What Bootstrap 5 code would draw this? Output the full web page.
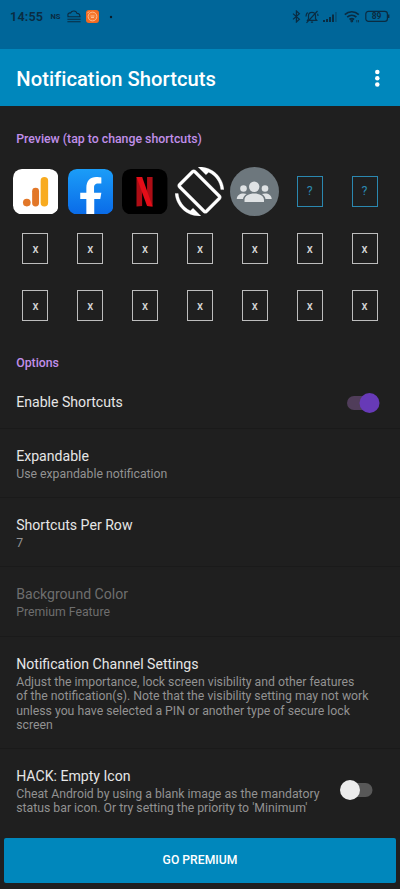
<!DOCTYPE html>
<html lang="en" data-bs-theme="dark">
<head>
<meta charset="utf-8">
<meta name="viewport" content="width=device-width, initial-scale=1">
<title>Notification Shortcuts</title>
<link href="https://cdn.jsdelivr.net/npm/bootstrap@5.3.0/dist/css/bootstrap.min.css" rel="stylesheet">
<style>
body{background:#1f1f1f;font-family:Roboto,"Liberation Sans",sans-serif;height:889px;overflow:hidden}
svg{display:block;flex:none}
.status{height:49px;background:#006699;color:#0a2c42;padding:0 9px 0 10px}
.status-in{height:33px}
.clock{font-size:12.6px;font-weight:600;letter-spacing:.2px;line-height:16px;width:40.5px}
.carrier{font-size:7.6px;font-weight:700;line-height:10px;width:16.5px}
.bt{margin-right:4px}
.bell{margin-right:4px}
.signal{margin-right:7px}
.wifi{margin-right:5px}
.appbar{height:57px;background:#0087bc;padding:2px 15px 0 16.3px}
.appbar h1{font-size:20.2px;font-weight:500;letter-spacing:.03px;color:#fff;line-height:26px}
.heading{font-size:12.3px;font-weight:500;color:#c18fea;line-height:16px;padding-left:16.2px}
.heading-first{padding-top:25px}
.heading-next{padding-top:21px}
.shortcuts{display:grid;grid-template-columns:repeat(7,1fr);grid-auto-rows:57px;padding:0 8px;margin-top:16px}
.slot{width:26px;height:31px;border:1.4px solid #bdbdbd;color:#d2d2d2;font-size:12px;font-weight:500;line-height:1}
.slot-new{border-color:#2b88b0;color:#2b88b0;font-size:12.5px;font-weight:400}
.pref{padding:16.75px 16.2px 0;height:69px;border-bottom:1px solid #1a1a1a;color:#e6e6e6}
.title{font-size:14.1px;line-height:20.5px}
.desc{font-size:12.27px;line-height:14.4px;color:#929292;padding-top:.8px}
.off,.off .desc{color:#6e6e6e}
.pref-switch{height:58px;padding-top:6px}
.pref-off{height:70px}
.pref-channel{height:112px}
.pref-last{height:89px;border:0}
.toggle{width:33px;height:20px}
.toggle-on{margin-right:3.5px}
.toggle-off{margin:14px 10.8px 0 0}
.premium{height:45px;margin:0 4px;background:#0087bc;border-radius:2px;color:#fff;font-size:12.2px;font-weight:500}
</style>
<script src="https://cdn.jsdelivr.net/npm/bootstrap@5.3.0/dist/js/bootstrap.bundle.min.js"></script>
</head>
<body>
<header>
  <div class="status">
    <div class="status-in d-flex align-items-center">
      <span class="clock">14:55</span>
      <span class="carrier">NS</span>
      <svg width="14" height="13" viewBox="0 0 14 13" fill="none" stroke="#0a2c42" stroke-width="1.1"><path d="M1.2 6.500C0 3.500 2.300 2.600 3.600 3 4.700.2 9.200.2 10 3.400c2-.1 3 1.200 2.800 3.100M.4 6.700h13.200M.4 9.200h13.200M.4 11.800h13.200"/></svg>
      <svg class="ms-1" width="15" height="15" viewBox="0 0 15 15"><rect x="1" y="1" width="13" height="13" rx="3" fill="#f26a21"/><circle cx="7.500" cy="7.500" r="4.400" fill="#f5792f" stroke="#ffc49a" stroke-width=".9"/><path d="M5.500 7h4M6 8.500h3" stroke="#ffd9bd" stroke-width=".7"/><path d="M2.400 4.200 4.200 2.400" stroke="#ffd9bd" stroke-width=".8"/></svg>
      <svg class="ms-2" width="6" height="4" viewBox="0 0 6 4"><circle cx="3" cy="2" r="1.200" fill="#0a1c28"/></svg>
      <div class="ms-auto d-flex align-items-center">
        <svg class="bt" width="9" height="13" viewBox="0 0 9 13" fill="none" stroke="#0a2c42" stroke-width="1.200"><path d="m1 3.600 6.400 5.600-3 2.800V1l3 2.800L1 9.400"/></svg>
        <svg class="bell" width="14" height="14" viewBox="0 0 14 14" fill="none" stroke="#0a2c42" stroke-width="1.200"><path d="M2.500 10.300h9.200L10.500 8.700V5.500C10.500 3.500 9 2.300 7 2.300S3.500 3.500 3.500 5.500v3.200zM5.900 12.200h2.200M1.500 12.800 12.500 1M1 6.500c0-2 .6-3 1.600-4M13 6c0-.8-.1-1.500-.5-2.200"/></svg>
        <svg class="signal" width="14" height="12" viewBox="0 0 14 12" fill="#0a2c42"><path d="M0 9h2v2H0zM3 8h2v3H3zM6 6h2v5H6zM9 3.500h2V11H9z"/><path opacity=".35" d="M12 1h1.800v10H12z"/></svg>
        <svg class="wifi" width="16" height="13" viewBox="0 0 16 13" fill="none" stroke="#0a2c42" stroke-width="1.700"><path d="M.8 4.600c4-3.800 10-3.800 14 0M3.200 7.200c2.700-2.500 6.500-2.500 9.200 0M5.500 9.500c1.400-1.200 3.200-1.200 4.600 0"/><circle cx="7.800" cy="11" r=".6"/><path d="M12.800 10v2.400M14.500 10v2.400" stroke-width=".8"/></svg>
        <svg width="26" height="13" viewBox="0 0 26 13"><rect x=".8" y="1.300" width="21.600" height="10" rx="2.600" fill="none" stroke="#0a2c42" stroke-width="1.200"/><path d="M23.700 4.500v3.600" stroke="#0a2c42" stroke-width="1.400"/><text x="11.600" y="9.300" text-anchor="middle" font-size="8.500" font-weight="700" fill="#0a2c42">89</text></svg>
      </div>
    </div>
  </div>
  <div class="appbar d-flex align-items-center justify-content-between">
    <h1 class="m-0">Notification Shortcuts</h1>
    <svg width="15" height="20" viewBox="0 0 15 20" fill="#fff"><circle cx="7.300" cy="3" r="2.250"/><circle cx="7.300" cy="9.200" r="2.250"/><circle cx="7.300" cy="15.400" r="2.250"/></svg>
  </div>
</header>
<main>
  <h2 class="heading heading-first m-0">Preview (tap to change shortcuts)</h2>
  <div class="shortcuts">
    <div class="d-flex align-items-center justify-content-center">
      <svg width="45.400" height="45.400" viewBox="0 0 46 46"><rect width="46" height="46" rx="9" fill="#fff"/><circle cx="14" cy="34" r="3.900" fill="#e27728"/><rect x="19.400" y="19" width="7" height="19" rx="3.500" fill="#e27728"/><rect x="28" y="8" width="7.600" height="30" rx="3.800" fill="#f8ab1f"/></svg>
    </div>
    <div class="d-flex align-items-center justify-content-center">
      <svg width="45.400" height="45.400" viewBox="0 0 46 46"><defs><linearGradient id="fb" x2="0" y2="1"><stop stop-color="#1b9df8"/><stop offset="1" stop-color="#0a6be8"/></linearGradient></defs><rect width="46" height="46" rx="9" fill="url(#fb)"/><path d="M18.600 46V30.400h-6.200V24h6.200v-4.800c0-7.200 3.900-11.100 10-11.100 2.100 0 4.200.3 5.200.6v5.900h-3.200c-3.200 0-4.200 1.900-4.200 4.200V24h7.400l-1.100 6.400h-6.100V46z" fill="#fff"/></svg>
    </div>
    <div class="d-flex align-items-center justify-content-center">
      <svg width="45.400" height="45.400" viewBox="0 0 46 46"><rect width="46" height="46" rx="9" fill="#000"/><path d="M14.700 8h5.700v29.500l-5.700.5zM25.400 8H31v30l-5.600-.5z" fill="#ad0d15"/><path d="M14.700 8h5.700L31 38l-5.600-.5z" fill="#e50d18"/></svg>
    </div>
    <div class="d-flex align-items-center justify-content-center">
      <svg width="49" height="49" viewBox="0 0 24 24" fill="#fff"><path d="M16.480 2.520c3.270 1.550 5.610 4.720 5.970 8.480h1.500C23.440 4.840 18.290 0 12 0l-.66.03 3.810 3.810 1.330-1.320zm-6.250-.77c-.59-.59-1.540-.59-2.120 0L1.750 8.110c-.59.59-.59 1.540 0 2.120l12.020 12.020c.59.59 1.540.59 2.120 0l6.360-6.360c.59-.59.59-1.540 0-2.120L10.230 1.750zm4.600 19.440L2.810 9.170l6.360-6.360 12.020 12.020-6.360 6.360zm-7.310.29C4.250 19.940 1.910 16.760 1.550 13H.05C.56 19.160 5.710 24 12 24l.66-.03-3.810-3.810-1.330 1.320z" stroke="#fff" stroke-width=".15"/></svg>
    </div>
    <div class="d-flex align-items-center justify-content-center">
      <svg width="49" height="49" viewBox="0 0 49 49"><circle cx="24.500" cy="24.500" r="24.500" fill="#6d777d"/><g fill="#dfe2e4"><circle cx="13.500" cy="21.500" r="3.300"/><circle cx="35" cy="21.500" r="3.300"/><circle cx="24.200" cy="19.800" r="5.200"/><path d="M14.500 35v-2c0-4 4.500-6.400 9.700-6.400S34 29 34 33v2zM6.800 32c0-3.600 3-5.600 6.700-5.600 1.200 0 2.200.2 3.100.6-2 1.200-3.300 2.900-3.600 5zM41.700 32c0-3.600-3-5.600-6.700-5.600-1.200 0-2.200.2-3.100.6 2 1.200 3.300 2.900 3.600 5z"/></g></svg>
    </div>
    <div class="d-flex align-items-center justify-content-center"><span class="slot slot-new d-flex align-items-center justify-content-center">?</span></div>
    <div class="d-flex align-items-center justify-content-center"><span class="slot slot-new d-flex align-items-center justify-content-center">?</span></div>
    <div class="d-flex align-items-center justify-content-center"><span class="slot d-flex align-items-center justify-content-center">x</span></div>
    <div class="d-flex align-items-center justify-content-center"><span class="slot d-flex align-items-center justify-content-center">x</span></div>
    <div class="d-flex align-items-center justify-content-center"><span class="slot d-flex align-items-center justify-content-center">x</span></div>
    <div class="d-flex align-items-center justify-content-center"><span class="slot d-flex align-items-center justify-content-center">x</span></div>
    <div class="d-flex align-items-center justify-content-center"><span class="slot d-flex align-items-center justify-content-center">x</span></div>
    <div class="d-flex align-items-center justify-content-center"><span class="slot d-flex align-items-center justify-content-center">x</span></div>
    <div class="d-flex align-items-center justify-content-center"><span class="slot d-flex align-items-center justify-content-center">x</span></div>
    <div class="d-flex align-items-center justify-content-center"><span class="slot d-flex align-items-center justify-content-center">x</span></div>
    <div class="d-flex align-items-center justify-content-center"><span class="slot d-flex align-items-center justify-content-center">x</span></div>
    <div class="d-flex align-items-center justify-content-center"><span class="slot d-flex align-items-center justify-content-center">x</span></div>
    <div class="d-flex align-items-center justify-content-center"><span class="slot d-flex align-items-center justify-content-center">x</span></div>
    <div class="d-flex align-items-center justify-content-center"><span class="slot d-flex align-items-center justify-content-center">x</span></div>
    <div class="d-flex align-items-center justify-content-center"><span class="slot d-flex align-items-center justify-content-center">x</span></div>
    <div class="d-flex align-items-center justify-content-center"><span class="slot d-flex align-items-center justify-content-center">x</span></div>
  </div>
  <h2 class="heading heading-next m-0">Options</h2>
  <section>
    <div class="pref pref-switch d-flex justify-content-between align-items-center">
      <div class="title">Enable Shortcuts</div>
      <svg class="toggle toggle-on" viewBox="0 0 33 20"><rect x="0" y="3" width="30" height="14" rx="7" fill="#503d5a"/><circle cx="22.500" cy="10" r="10" fill="#673ab7"/></svg>
    </div>
    <div class="pref">
      <div class="title">Expandable</div>
      <div class="desc">Use expandable notification</div>
    </div>
    <div class="pref">
      <div class="title">Shortcuts Per Row</div>
      <div class="desc">7</div>
    </div>
    <div class="pref pref-off off">
      <div class="title">Background Color</div>
      <div class="desc">Premium Feature</div>
    </div>
    <div class="pref pref-channel">
      <div class="title">Notification Channel Settings</div>
      <div class="desc text-nowrap">Adjust the importance, lock screen visibility and other features<br>of the notification(s). Note that the visibility setting may not work<br>unless you have selected a PIN or another type of secure lock<br>screen</div>
    </div>
    <div class="pref pref-last d-flex justify-content-between">
      <div>
        <div class="title">HACK: Empty Icon</div>
        <div class="desc text-nowrap">Cheat Android by using a blank image as the mandatory<br>status bar icon. Or try setting the priority to 'Minimum'</div>
      </div>
      <svg class="toggle toggle-off" viewBox="0 0 33 20"><rect x="3" y="3" width="29.500" height="14" rx="7" fill="#585858"/><circle cx="10" cy="10" r="10" fill="#ececec"/></svg>
    </div>
  </section>
</main>
<footer class="d-grid"><button class="premium btn p-0 border-0">GO PREMIUM</button></footer>
</body>
</html>
